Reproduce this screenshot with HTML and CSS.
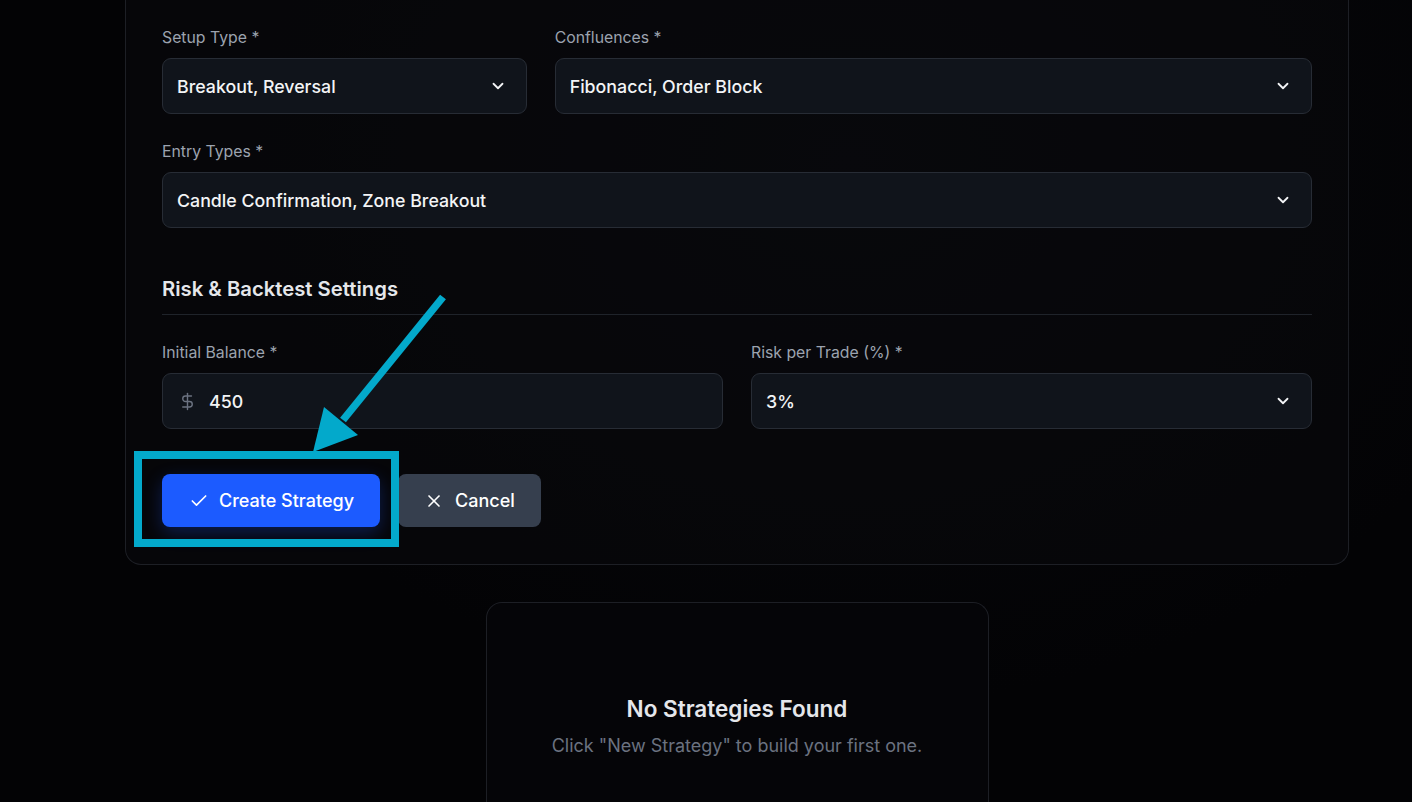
FILE: index.html
```html
<!DOCTYPE html>
<html lang="en">
<head>
<meta charset="utf-8">
<title>Strategies</title>
<link rel="stylesheet" href="styles.css">
</head>
<body>
<main class="main">
  <div class="wrap">
    <section class="card">
      <div class="grid3">
        <div class="field">
          <label class="label">Setup Type *</label>
          <div class="control">
            <span class="value">Breakout, Reversal</span>
            <svg class="chev" viewBox="0 0 24 24"><path d="M6 9l6 6 6-6"/></svg>
          </div>
        </div>
        <div class="field span2">
          <label class="label">Confluences *</label>
          <div class="control">
            <span class="value">Fibonacci, Order Block</span>
            <svg class="chev" viewBox="0 0 24 24"><path d="M6 9l6 6 6-6"/></svg>
          </div>
        </div>
        <div class="field span3">
          <label class="label">Entry Types *</label>
          <div class="control">
            <span class="value">Candle Confirmation, Zone Breakout</span>
            <svg class="chev" viewBox="0 0 24 24"><path d="M6 9l6 6 6-6"/></svg>
          </div>
        </div>
      </div>

      <h3 class="section-title">Risk &amp; Backtest Settings</h3>

      <div class="grid2">
        <div class="field">
          <label class="label">Initial Balance *</label>
          <div class="control input">
            <svg class="dollar" viewBox="0 0 24 24"><path d="M12 2v20"/><path d="M17 5H9.5a3.5 3.5 0 0 0 0 7h5a3.5 3.5 0 0 1 0 7H6"/></svg>
            <span class="value">450</span>
          </div>
        </div>
        <div class="field">
          <label class="label">Risk per Trade (%) *</label>
          <div class="control">
            <span class="value">3%</span>
            <svg class="chev" viewBox="0 0 24 24"><path d="M6 9l6 6 6-6"/></svg>
          </div>
        </div>
      </div>

      <div class="actions">
        <div class="highlight-wrap">
          <button class="btn btn-primary">
            <svg class="ico" viewBox="0 0 24 24"><path d="M20 6L9 17l-5-5"/></svg>
            Create Strategy
          </button>
          <span class="highlight-box"></span>
          <svg class="arrow" viewBox="0 0 140 170" width="140" height="170">
            <line x1="130" y1="3" x2="30" y2="126" />
            <polygon points="0,158 11,113 45,141" />
          </svg>
        </div>
        <button class="btn btn-secondary">
          <svg class="ico" viewBox="0 0 24 24"><path d="M18 6L6 18"/><path d="M6 6l12 12"/></svg>
          Cancel
        </button>
      </div>
    </section>

    <section class="empty">
      <h2 class="empty-title">No Strategies Found</h2>
      <p class="empty-sub">Click "New Strategy" to build your first one.</p>
    </section>
  </div>
</main>
</body>
</html>
```

FILE: styles.css
```css
* { box-sizing: border-box; }

html, body {
  margin: 0;
  height: 100%;
}

body {
  background: #030305;
  background-image: radial-gradient(ellipse at 60% 20%, #08090d 0%, #030305 60%);
  font-family: Inter, "Noto Sans", "Liberation Sans", sans-serif;
  color: #f3f4f6;
  overflow: hidden;
}

.main {
  padding-left: 62px;
}

.wrap {
  width: 1224px;
  margin: 0 auto;
  display: flex;
  flex-direction: column;
  align-items: center;
}

.card {
  width: 1224px;
  border: 1px solid #1d1f25;
  border-top: none;
  border-radius: 0 0 16px 16px;
  background: rgba(8, 9, 12, 0.6);
  padding: 28px 36px 37px 36px;
}

.grid3 {
  display: grid;
  grid-template-columns: repeat(3, 1fr);
  gap: 28px;
}

.grid2 {
  display: grid;
  grid-template-columns: 1fr 1fr;
  gap: 28px;
}

.span2 { grid-column: span 2; }
.span3 { grid-column: span 3; }

.field {
  display: flex;
  flex-direction: column;
}

.label {
  font-size: 15.8px;
  line-height: 19px;
  color: #9ca3af;
  font-weight: 400;
  margin-bottom: 11px;
}

.control {
  height: 56px;
  border: 1px solid #272c35;
  border-radius: 9px;
  background: #10141b;
  display: flex;
  align-items: center;
  justify-content: space-between;
  padding: 0 19px 0 14px;
}

.control.input {
  justify-content: flex-start;
  padding-left: 15px;
}

.value {
  font-size: 17.8px;
  color: #f3f4f6;
  font-weight: 450;
}

.chev {
  width: 18px;
  height: 18px;
  fill: none;
  stroke: #f3f4f6;
  stroke-width: 2.4;
  stroke-linecap: round;
  stroke-linejoin: round;
}

.dollar {
  width: 19px;
  height: 23px;
  fill: none;
  stroke: #6b7280;
  stroke-width: 1.8;
  stroke-linecap: round;
  stroke-linejoin: round;
  margin-right: 12px;
}

.section-title {
  margin: 47px 0 28px 0;
  padding-bottom: 11px;
  border-bottom: 1px solid #1f232a;
  font-size: 20.3px;
  line-height: 28px;
  font-weight: 600;
  color: #e5e7eb;
}

.actions {
  margin-top: 45px;
  display: flex;
  gap: 18px;
  align-items: center;
}

.highlight-wrap {
  position: relative;
  display: flex;
}

.btn {
  height: 53px;
  border: none;
  border-radius: 8px;
  font-family: inherit;
  font-size: 18px;
  font-weight: 500;
  color: #ffffff;
  display: flex;
  align-items: center;
  gap: 10px;
  padding: 0 24px 0 27px;
  cursor: pointer;
}

.btn-primary {
  width: 218px;
  background: #1c5bff;
  box-shadow: 0 6px 18px rgba(28, 91, 255, 0.28);
}

.btn-secondary {
  width: 143px;
  background: #363f4e;
  padding-left: 26px;
  gap: 11px;
}

.ico {
  width: 20px;
  height: 20px;
  fill: none;
  stroke: #ffffff;
  stroke-width: 2;
  stroke-linecap: round;
  stroke-linejoin: round;
  flex: none;
}

.highlight-box {
  position: absolute;
  left: -28px;
  top: -23px;
  width: 265px;
  height: 96px;
  border: 8px solid #03a9cb;
  pointer-events: none;
}

.arrow {
  position: absolute;
  left: 151px;
  top: -180px;
  overflow: visible;
  pointer-events: none;
}

.arrow line {
  stroke: #03a9cb;
  stroke-width: 7.5;
}

.arrow polygon {
  fill: #03a9cb;
}

.empty {
  margin-top: 37px;
  width: 503px;
  height: 201px;
  border: 1px solid #1d1f25;
  border-bottom: none;
  border-radius: 16px 16px 0 0;
  background: rgba(6, 7, 10, 0.6);
  display: flex;
  flex-direction: column;
  align-items: center;
  padding-top: 92px;
}

.empty-title {
  margin: 0;
  font-size: 22.5px;
  line-height: 28px;
  font-weight: 600;
  color: #e5e7eb;
}

.empty-sub {
  margin: 11px 0 0 0;
  font-size: 18px;
  line-height: 24px;
  color: #6b7280;
}
```
